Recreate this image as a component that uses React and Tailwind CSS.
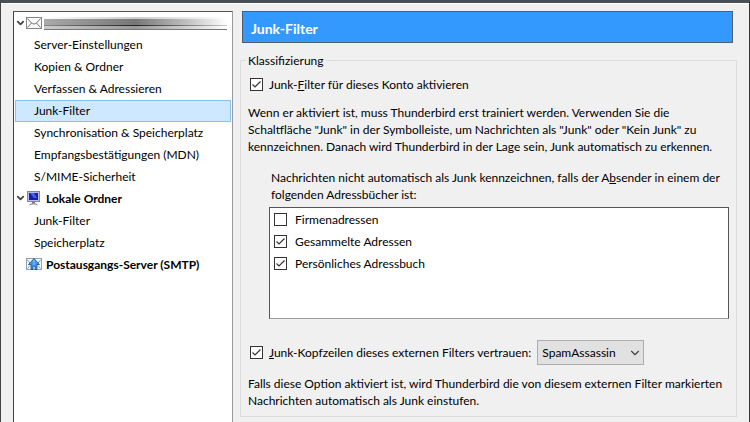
import React, { useState } from 'react';
import { ChevronDown } from 'lucide-react';

const accountItems = [
  'Server-Einstellungen',
  'Kopien & Ordner',
  'Verfassen & Adressieren',
  'Junk-Filter',
  'Synchronisation & Speicherplatz',
  'Empfangsbestätigungen (MDN)',
  'S/MIME-Sicherheit',
];

const localItems = ['Junk-Filter', 'Speicherplatz'];

const MailIcon = () => (
  <svg viewBox="0 0 16 12" className="h-3 w-4 shrink-0" fill="none" aria-hidden="true">
    <rect x="0.5" y="0.5" width="15" height="11" fill="#fafafa" stroke="#858585" />
    <path d="M1.500 1.500 5.500 6 1.500 10.500M14.500 1.500l-4 4.500 4 4.500M5.500 6c1.500 1.300 3.500 1.300 5 0" stroke="#666" strokeWidth="0.9" />
  </svg>
);

const ComputerIcon = () => (
  <svg viewBox="0 0 14 15" className="h-[15px] w-3.5 shrink-0" aria-hidden="true">
    <rect x="0.5" y="0.5" width="12" height="10" fill="#b9bde0" stroke="#8085a8" />
    <rect x="2" y="2" width="9" height="7" fill="#1420b4" />
    <path d="M3 2h4l3 5H7z" fill="#4a62e0" />
    <path d="M5 11h3v1.500H5z" fill="#777" />
    <path d="M2.500 14c1-1.600 7-1.600 8 0" fill="none" stroke="#777" />
  </svg>
);

const OutgoingIcon = () => (
  <svg viewBox="0 0 16 12" className="h-3 w-4 shrink-0" aria-hidden="true">
    <rect x="0.5" y="0.5" width="15" height="11" fill="#f4f8fb" stroke="#8fa3b3" />
    <path d="M1 1.500 4 5M15 1.500 12 5M1.500 10.500l2.500-3M14.500 10.500 12 7.500" stroke="#6c8799" strokeWidth="0.8" />
    <path d="M8 .5 13.500 6.500H11v5H9V8H7v3.500H5v-5H2.500z" fill="#3f97ea" stroke="#124f9c" strokeWidth="0.8" />
    <path d="M8 2v5" stroke="#8cc8ff" />
  </svg>
);

const Twisty = () => (
  <ChevronDown className="h-3 w-[11px] shrink-0 text-[#444]" strokeWidth={4} aria-hidden="true" />
);

const TreeItem = ({ label, selected, onSelect }) => (
  <li>
    <button
      type="button"
      onClick={onSelect}
      className={
        selected
          ? 'flex h-[22px] w-full items-center border border-[#84c3ee] bg-[#cde8ff] pb-0.5 pl-[18px] text-left'
          : 'flex h-[22px] w-full items-center border border-transparent pb-0.5 pl-[18px] text-left'
      }
    >
      {label}
    </button>
  </li>
);

const CheckBox = ({ id, checked, onChange }) => (
  <span className="grid h-[13px] w-[13px] shrink-0">
    <input
      id={id}
      type="checkbox"
      checked={checked}
      onChange={onChange}
      className="peer col-start-1 row-start-1 h-[13px] w-[13px] appearance-none border border-[#333] bg-white"
    />
    <svg
      viewBox="0 0 13 13"
      className="pointer-events-none invisible col-start-1 row-start-1 h-[13px] w-[13px] peer-checked:visible"
      fill="none"
      stroke="#333"
      strokeWidth="1.2"
      aria-hidden="true"
    >
      <path d="M2.500 6.500 5 9l5.500-5.500" />
    </svg>
  </span>
);

const Sidebar = () => {
  const [selected, setSelected] = useState('konto-Junk-Filter');

  return (
    <nav className="w-[220px] shrink-0 border-t border-r border-l border-t-[#555] border-r-[#999] border-l-[#444] bg-white px-px">
      <div className="flex h-[22px] items-center">
        <Twisty />
        <MailIcon />
        {/* blacked-out account name */}
        <div className="flex flex-1 flex-col pr-1 pl-0.5">
          <div className="h-0.5 bg-linear-to-r from-white via-[#ccc] to-white"></div>
          <div className="h-1.5 bg-linear-to-r from-[#aaa] via-[#777] to-white"></div>
          <div className="h-px bg-linear-to-r from-[#888] via-[#222] to-[#ccc]"></div>
          <div className="h-1 border-b border-[#777] bg-linear-to-r from-[#ccc] via-[#999] to-white"></div>
        </div>
      </div>
      <ul>
        {accountItems.map((label) => (
          <TreeItem
            key={label}
            label={label}
            selected={selected === `konto-${label}`}
            onSelect={() => setSelected(`konto-${label}`)}
          />
        ))}
      </ul>
      <div className="flex h-[22px] items-center pb-0.5 font-bold">
        <Twisty />
        <span className="flex w-5 justify-center pr-1">
          <ComputerIcon />
        </span>
        <span>Lokale Ordner</span>
      </div>
      <ul>
        {localItems.map((label) => (
          <TreeItem
            key={label}
            label={label}
            selected={selected === `lokal-${label}`}
            onSelect={() => setSelected(`lokal-${label}`)}
          />
        ))}
      </ul>
      <div className="flex h-[22px] items-center gap-1 pb-0.5 pl-[11px] font-bold">
        <OutgoingIcon />
        <span>Postausgangs-Server (SMTP)</span>
      </div>
    </nav>
  );
};

const JunkSettings = () => {
  const [enabled, setEnabled] = useState(true);
  const [trustHeaders, setTrustHeaders] = useState(true);
  const [books, setBooks] = useState([
    { id: 'firma', label: 'Firmenadressen', checked: false },
    { id: 'gesammelt', label: 'Gesammelte Adressen', checked: true },
    { id: 'persoenlich', label: 'Persönliches Adressbuch', checked: true },
  ]);

  const toggleBook = (id) =>
    setBooks(books.map((b) => (b.id === id ? { ...b, checked: !b.checked } : b)));

  return (
    <main className="min-w-0 flex-1 pr-3 pl-[7px]">
      <h1 className="mr-1 ml-0.5 flex h-8 items-center border border-[#4d5f70] bg-[#3399ff] pt-1 pl-2 text-sm font-bold text-white">
        Junk-Filter
      </h1>

      <fieldset className="mt-[9px] border border-[#dcdcdc] px-[7px] pb-[7px]">
        <legend className="-ml-0.5 px-0.5">Klassifizierung</legend>

        <div className="mt-[7px] ml-0.5 flex items-center gap-1.5">
          <CheckBox id="enable" checked={enabled} onChange={() => setEnabled(!enabled)} />
          <label htmlFor="enable">
            Junk-<u>F</u>ilter für dieses Konto aktivieren
          </label>
        </div>

        <p className="mt-[11px]">
          Wenn er aktiviert ist, muss Thunderbird erst trainiert werden. Verwenden Sie die
          <br />
          Schaltfläche "Junk" in der Symbolleiste, um Nachrichten als "Junk" oder "Kein Junk" zu
          <br />
          kennzeichnen. Danach wird Thunderbird in der Lage sein, Junk automatisch zu erkennen.
        </p>

        <div className="mt-3.5 ml-[21px]">
          <p id="books-label" className="ml-0.5 whitespace-nowrap">
            Nachrichten nicht automatisch als Junk kennzeichnen, falls der A<u>b</u>sender in einem der
            <br />
            folgenden Adressbücher ist:
          </p>
          <ul
            aria-labelledby="books-label"
            className="mt-1 min-h-28 border border-[#555] border-b-[#999] bg-white pl-1"
          >
            {books.map((book) => (
              <li key={book.id} className="flex h-[22px] items-center gap-2">
                <CheckBox id={book.id} checked={book.checked} onChange={() => toggleBook(book.id)} />
                <label htmlFor={book.id}>{book.label}</label>
              </li>
            ))}
          </ul>
        </div>

        <div className="mt-[21px] ml-0.5 flex items-center gap-1.5">
          <CheckBox
            id="trust"
            checked={trustHeaders}
            onChange={() => setTrustHeaders(!trustHeaders)}
          />
          <label htmlFor="trust">
            <u>J</u>unk-Kopfzeilen dieses externen Filters vertrauen:
          </label>
          <div className="grid items-center">
            <select
              aria-label="Externer Filter"
              defaultValue="SpamAssassin"
              className="col-start-1 row-start-1 h-[25px] w-[107px] appearance-none border border-[#adadad] bg-[#e1e1e1] pl-1"
            >
              <option>SpamAssassin</option>
              <option>Bogofilter</option>
              <option>DSPAM</option>
            </select>
            <ChevronDown
              className="pointer-events-none col-start-1 row-start-1 mr-0.5 h-3.5 w-3.5 justify-self-end text-[#444]"
              aria-hidden="true"
            />
          </div>
        </div>

        <p className="mt-2.5">
          Falls diese Option aktiviert ist, wird Thunderbird die von diesem externen Filter markierten
          <br />
          Nachrichten automatisch als Junk einstufen.
        </p>
      </fieldset>
    </main>
  );
};

const App = () => (
  <div className="flex min-h-screen flex-col border-t-3 border-r border-l border-t-[#475056] border-r-[#333] border-l-[#444] bg-[#f0f0f0] font-[Lato,'Noto_Sans',sans-serif] text-xs leading-[17px] text-black">
    <div className="flex flex-1 border-t border-white pt-[7px] pl-3">
      <Sidebar />
      <JunkSettings />
    </div>
  </div>
);

export default App;
